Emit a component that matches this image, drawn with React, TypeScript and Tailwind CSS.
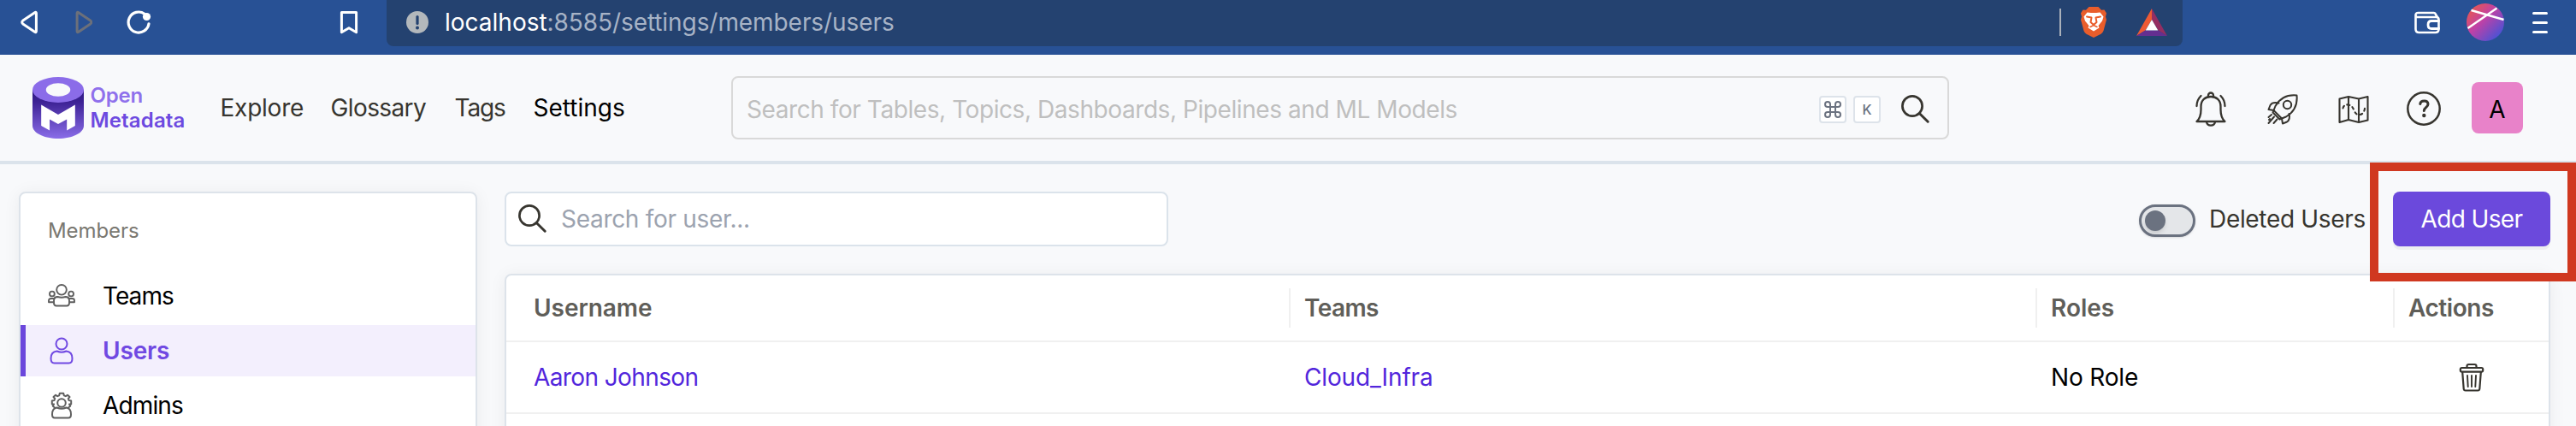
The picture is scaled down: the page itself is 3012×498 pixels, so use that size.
import type { ReactNode } from "react";

type IconProps = { w: number; h: number; className?: string; children: ReactNode };

function Icon({ w, h, className = "", children }: IconProps) {
  return (
    <svg
      width={w}
      height={h}
      viewBox={`0 0 ${w} ${h}`}
      fill="none"
      stroke="currentColor"
      strokeLinecap="round"
      strokeLinejoin="round"
      className={`shrink-0 ${className}`}
    >
      {children}
    </svg>
  );
}

function BrowserBar() {
  return (
    <div className="flex h-16 bg-[#285195] text-white">
      <div className="flex h-[52px] w-[452px] items-center pl-6">
        <Icon w={20} h={28}>
          <path d="M18.4 3.6v20.8q0 2-1.8.9L2.8 16q-2.2-2 0-4L16.6 2.7q1.8-1.1 1.8.9z" strokeWidth="3" />
        </Icon>
        <Icon w={20} h={28} className="ml-[44px] text-[#6c707a]">
          <path d="M2.1 3.6v20.8q0 2 1.8.9L17.7 16q2.2-2 0-4L3.9 2.7q-1.8-1.1-1.8.9z" strokeWidth="3" />
        </Icon>
        <Icon w={30} h={30} className="ml-10">
          <path d="M21 5.2A12 12 0 1 0 26 16.8" strokeWidth="3.2" />
          <circle cx="23.5" cy="8.5" r="4.6" fill="currentColor" stroke="none" />
        </Icon>
        <Icon w={24} h={28} className="ml-[218px]">
          <path d="M3.4 2.5h17.200v23.300L12 20.800l-8.600 5z" strokeWidth="3" />
        </Icon>
      </div>
      <div className="flex h-[54px] w-[2100px] items-center rounded-b-lg bg-[#244270] pb-0.5 pl-[23px]">
        <Icon w={26} h={26}>
          <circle cx="13" cy="13" r="13" fill="#b3b8bc" stroke="none" />
          <path d="M13 6.5v8" stroke="#244270" strokeWidth="3.2" />
          <circle cx="13" cy="19.5" r="2" fill="#244270" stroke="none" />
        </Icon>
        <span className="ml-[19px] w-[119.5px] text-[28px] leading-[50px]">localhost</span>
        <span className="w-[1768.5px] whitespace-nowrap text-[28px] leading-[50px] tracking-[-0.071px] text-[#a7b3c6]">
          :8585/settings/members/users
        </span>
        <div className="h-8 w-0.5 shrink-0 bg-[#aab1bb]" />
        <Icon w={32} h={36} className="ml-[22px]">
          <path
            d="M10.5 0h11l3.5 3.8 3.5-.3 2.5 4-1 4 1 3.5L27.5 28q-.8 2.300-3 3.800L16 36l-8.500-4.200q-2.200-1.500-3-3.800L1 15l1-3.500-1-4 2.500-4 3.500.3z"
            fill="#e95d2b"
            stroke="none"
          />
          <path
            d="M8.5 6.5 13 7h6l4.500-.5 4 5-1.500 5-4.500 5.500 1 2.500L16 28.500 9.500 24.500l1-2.500L6 16.500l-1.500-5z"
            fill="#fff"
            stroke="none"
          />
          <path d="M8 11.500l5.500 1-1 5.500 3.500 3 3.500-3-1-5.500 5.500-1" stroke="#e95d2b" strokeWidth="2" />
          <path d="M12 23.500l4-2 4 2" stroke="#e95d2b" strokeWidth="1.6" />
        </Icon>
        <Icon w={36} h={32} className="ml-[34px]">
          <path d="M18 0v13L10.500 25.500 0 32z" fill="#ee5a34" stroke="none" />
          <path d="M18 0v13l7.500 12.500L36 32z" fill="#942e62" stroke="none" />
          <path d="M0 32l10.500-6.500h15L36 32z" fill="#642f90" stroke="none" />
          <path d="M18 13l7.300 12.500H10.700z" fill="#fff" stroke="none" />
        </Icon>
      </div>
      <div className="flex h-[52px] flex-1 items-center pl-[270px]">
        <Icon w={32} h={28} className="mt-0.5">
          <path d="M2.500 5v16q0 4 4 4h19q4 0 4-4V10q0-3-3-3h-21q-3 0-3-2.500Q2.500 2 5.500 2h18q2 0 2.500 2l2 3" strokeWidth="2.6" />
          <path d="M29.500 11.500H21q-4 0-4 4.500t4 4.500h8.500" strokeWidth="2.8" />
        </Icon>
        <svg width="44" height="44" viewBox="0 0 44 44" className="ml-[30px] shrink-0">
          <defs>
            <linearGradient id="profile" x1="0.1" y1="0.1" x2="0.9" y2="0.9">
              <stop offset="0" stopColor="#e8584f" />
              <stop offset="0.42" stopColor="#c041a6" />
              <stop offset="1" stopColor="#4353d8" />
            </linearGradient>
          </defs>
          <circle cx="22" cy="22" r="22" fill="url(#profile)" />
          <path d="M1.500 29 35.500 5.500M5.500 8 43.500 19" stroke="#fff" strokeWidth="2.4" />
        </svg>
        <div className="ml-[33px] flex h-[25px] w-[18px] flex-col justify-between">
          <div className="h-[3px] rounded-full bg-white" />
          <div className="h-[3px] rounded-full bg-white" />
          <div className="h-[3px] rounded-full bg-white" />
        </div>
      </div>
    </div>
  );
}

function Logo() {
  return (
    <div className="flex w-[219.5px] items-center">
      <svg width="60" height="72" viewBox="0 0 56 72" preserveAspectRatio="none" className="shrink-0">
        <defs>
          <linearGradient id="drum" x1="0" y1="0" x2="0" y2="1">
            <stop offset="0" stopColor="#2d1a80" />
            <stop offset="0.25" stopColor="#3d2295" />
            <stop offset="1" stopColor="#8a6de8" />
          </linearGradient>
        </defs>
        <path d="M0 15v42c0 8.300 12.500 15 28 15s28-6.700 28-15V15z" fill="url(#drum)" />
        <ellipse cx="28" cy="15" rx="28" ry="15" fill="#8b6ce9" />
        <ellipse cx="28" cy="15" rx="13.300" ry="7.800" fill="#f8f9fb" />
        <path d="M9.500 32.500 28 44l18.500-11.500V57L37.500 62.500V49.500L28 55l-9.300-5.500v13L9.500 57z" fill="#fff" />
      </svg>
      <div className="ml-[7.5px] text-2xl font-semibold leading-[29px]">
        <div className="tracking-[-0.2px] text-[#8f70ec]">Open</div>
        <div className="tracking-[0.14px] text-[#6d4ae0]">Metadata</div>
      </div>
    </div>
  );
}

function SearchIcon({ className = "" }: { className?: string }) {
  return (
    <Icon w={34} h={34} className={`text-[#37352f] ${className}`}>
      <circle cx="13" cy="13" r="11.6" strokeWidth="2.7" />
      <path d="M21.300 21.500 31.200 31.200" strokeWidth="3" />
    </Icon>
  );
}

function NavBar() {
  return (
    <div className="flex h-32 items-center border-b-4 border-[#dbe3eb] bg-[#f8f9fb] pl-[38px] text-[28px] leading-9 text-[#37352f]">
      <Logo />
      <span className="w-[129px] tracking-[-0.234px]">Explore</span>
      <span className="w-[145px] tracking-[-0.603px]">Glossary</span>
      <span className="w-[92px] tracking-[-1.139px]">Tags</span>
      <span className="w-[231.5px] text-black">Settings</span>
      <div className="flex h-[74px] w-[1424px] items-center rounded-lg border-2 border-[#d9d9d9] pl-4">
        <span className="mt-1 w-[1254px] whitespace-nowrap tracking-[-0.427px] text-[#bfbfbf]">
          Search for Tables, Topics, Dashboards, Pipelines and ML Models
        </span>
        <div className="mt-1 flex h-8 w-8 shrink-0 items-center justify-center rounded border-2 border-[#dde3ea] bg-white">
          <Icon w={20} h={20} className="text-[#6b7280]">
            <path
              d="M7 7V4a3 3 0 1 0-3 3h12a3 3 0 1 0-3-3v12a3 3 0 1 0 3-3H4a3 3 0 1 0 3 3z"
              strokeWidth="2"
            />
          </Icon>
        </div>
        <div className="mt-1 ml-2 flex h-8 w-8 shrink-0 items-center justify-center rounded border-2 border-[#dde3ea] bg-white text-base font-medium leading-4 text-[#6b7280]">
          K
        </div>
        <SearchIcon className="mt-1 ml-6" />
      </div>
      <Icon w={36} h={42} className="ml-[288px] mt-1">
        <g strokeWidth="2.3">
          <path d="M1.500 35h33c-4-3.500-5-7-5-14v-3.500C29.500 10 24.500 6 18 6S6.500 10 6.500 17.500V21c0 7-1 10.500-5 14z" />
          <path d="M15 6V4.500a3 3 0 0 1 6 0V6M13 35.500c1 5.500 9 5.500 10 0" />
          <path d="M6.500 5C3.500 8 1.500 12 1.500 17M29.500 5c3 3 5 7 5 12" />
        </g>
      </Icon>
      <Icon w={36} h={36} className="ml-[48px] mt-1">
        <g strokeWidth="2">
          <path d="M34.500 1.500C24 .5 15 4.500 9.500 14L7.500 19 17 28.500l5-2C31.500 21 35.500 12 34.500 1.500z" />
          <circle cx="23.500" cy="12.500" r="4.7" />
          <path d="M13.500 10.500C9 9.500 5 10.500 3.500 13L1.500 18l6 1M25.500 23c1 4 0 8-2.500 9.500L18 34.500l-1-6M7.500 19l-1 2.500 8 8 2.500-1" />
          <path d="M5 24l-3.500 3M8 26.500 1.500 34M11.500 29.500 7.500 34M2 30l1-1" />
        </g>
      </Icon>
      <Icon w={36} h={34} className="ml-[47px] mt-1">
        <g strokeWidth="2.1">
          <path d="M1.500 4.500 12 2l12 2.500L34.500 2v27.500L24 32l-12-3L1.500 32zM12 2v27M24 4.500V32" />
          <path d="M5.500 15.500C6.500 12 9 11 12 11.500c4 1 5 3 6.500 6.500s3 5 6 5c3.500 0 6-2.500 6.500-7.500" strokeDasharray="3 3.8" />
        </g>
      </Icon>
      <Icon w={40} h={40} className="ml-11 mt-0.5">
        <circle cx="20" cy="20" r="18.700" strokeWidth="2.5" />
        <path d="M15.800 14.500c.5-4.500 9-4.800 9.200.3 0 3.700-4.500 3.500-4.700 7.700" strokeWidth="3" />
        <circle cx="20.300" cy="28" r="2.2" fill="currentColor" stroke="none" />
      </Icon>
      <div className="ml-9 flex h-[60px] w-[60px] items-center justify-center rounded-lg bg-[#e882c9] pt-1 text-black">A</div>
    </div>
  );
}

function TeamsIcon() {
  return (
    <Icon w={32} h={30}>
      <g strokeWidth="1.9">
        <circle cx="16" cy="7.8" r="5.8" />
        <circle cx="4.9" cy="12.500" r="2.9" />
        <circle cx="27.1" cy="12.500" r="2.9" />
        <path d="M7 23v-2.500q0-4.500 4.500-4.500 4.500 1.500 9 0 4.500 0 4.500 4.500V23q0 3.500-3 3.500H10q-3 0-3-3.500z" />
        <path d="M7.300 18H3.500Q1 18 1 20.500v1.800h6M24.700 18h3.800q2.500 0 2.500 2.500v1.800h-6" />
      </g>
    </Icon>
  );
}

function UserIcon() {
  return (
    <Icon w={32} h={32}>
      <g strokeWidth="2">
        <circle cx="16" cy="8" r="6.5" />
        <path d="M3.500 25c0-5 2.500-8 7-8.500 3.500 1.500 7.500 1.500 11 0 4.500.5 7 3.500 7 8.500 0 4-1 5.500-4 5.500h-17c-3 0-4-1.500-4-5.500z" />
      </g>
    </Icon>
  );
}

function AdminIcon() {
  return (
    <Icon w={32} h={32}>
      <g strokeWidth="2">
        <circle cx="16" cy="13" r="4.8" />
        <path d="M8 18.500 5.800 16.800 7 14.500H4.800v-4L7.500 10l.7-2-1.700-2L9 3.800l2.200 1.400 2-.9.600-2.600h4.400l.6 2.600 2 .9L23 3.800 25.500 6l-1.700 2 .7 2 2.700.5v4H25l1.200 2.300L24 18.500" />
        <path d="M5 26.500c0-4.500 1.500-7.500 5.500-8 3.500 1.500 7.500 1.500 11 0 4 .5 5.500 3.500 5.500 8 0 3-1 4-3 4H8c-2 0-3-1-3-4z" />
      </g>
    </Icon>
  );
}

function Sidebar() {
  return (
    <div className="h-[300px] w-[536px] shrink-0 rounded-lg border-2 border-[#dde3ea] bg-white pt-[26px] text-[28px] leading-9 text-black shadow-[0_2px_20px_rgba(0,0,0,0.06)]">
      <div className="pl-8 text-2xl leading-9 tracking-[-0.070px] text-[#7a7871]">Members</div>
      <div className="mt-7 flex h-[60px] items-center pl-8">
        <span className="text-[#5f5f5f]"><TeamsIcon /></span>
        <span className="ml-8 tracking-[-0.934px]">Teams</span>
      </div>
      <div className="mt-1 flex h-[60px] items-center border-l-[6px] border-[#6b47dc] bg-[#f3effd] pl-[26px] font-semibold text-[#7049e2]">
        <UserIcon />
        <span className="ml-8 tracking-[-0.164px]">Users</span>
      </div>
      <div className="mt-1 flex h-[60px] items-center pl-8">
        <span className="text-[#5f5f5f]"><AdminIcon /></span>
        <span className="ml-8 tracking-[-0.863px]">Admins</span>
      </div>
    </div>
  );
}

function Toolbar() {
  return (
    <div className="flex h-16 items-center text-[28px] leading-9">
      <div className="flex h-16 w-[776px] items-center rounded-lg border-2 border-[#dbe3eb] bg-white pl-3.5">
        <SearchIcon />
        <span className="ml-4 tracking-[-0.301px] text-[#9ca3af]">Search for user...</span>
      </div>
      <div className="mt-1 ml-auto flex h-[38px] w-[66px] items-center rounded-full border-[3px] border-[#6b7280] bg-[#e4e6e9] pl-1 shadow-sm">
        <div className="h-6 w-6 rounded-full bg-[#6b7280] shadow-md" />
      </div>
      <span className="ml-4 w-[215px] tracking-[-0.321px] text-[#37352f]">Deleted Users</span>
      <button className="h-16 w-[184px] rounded-lg bg-[#6b49dc] text-center tracking-[-0.632px] text-white shadow-[0_4px_0_rgba(0,0,0,0.04)]">
        Add User
      </button>
    </div>
  );
}

function UsersTable() {
  return (
    <div className="mt-8 h-[220px] rounded-lg border-2 border-[#dde3ea] bg-white text-[28px] leading-9 shadow-[0_2px_20px_rgba(0,0,0,0.06)]">
      <div className="flex h-[78px] items-center border-b-2 border-[#f0f0f0] font-semibold text-[#5f5e59]">
        <div className="flex h-[46px] w-[917px] items-center border-r-2 border-[#f0f0f0] pl-8 tracking-[-0.050px]">Username</div>
        <div className="flex h-[46px] w-[873px] items-center border-r-2 border-[#f0f0f0] pl-4 tracking-[-0.604px]">Teams</div>
        <div className="flex h-[46px] w-[418px] items-center border-r-2 border-[#f0f0f0] pl-4">Roles</div>
        <div className="pl-4 tracking-[-0.442px]">Actions</div>
      </div>
      <div className="flex h-[84px] items-center border-b-2 border-[#f0f0f0] text-[#5226dc]">
        <div className="w-[917px] pl-8 tracking-[-0.6px]">Aaron Johnson</div>
        <div className="w-[873px] pl-4 tracking-[-0.140px]">Cloud_Infra</div>
        <div className="w-[418px] pl-4 tracking-[-0.157px] text-black">No Role</div>
        <div className="flex flex-1 justify-center">
          <Icon w={30} h={34} className="text-[#37352f]">
            <g strokeWidth="2.2">
              <rect x="1.8" y="6" width="26.4" height="4.6" rx="1.8" />
              <path d="M9.500 6V4Q9.500 2 11.500 2h7q2 0 2 2v2M4.200 11l1.500 19.500q.2 2 2 2h14.600q1.800 0 2-2L25.800 11" />
              <path d="M10 15l.7 13M15 15v13M20 15l-.7 13" strokeWidth="1.9" />
            </g>
          </Icon>
        </div>
      </div>
    </div>
  );
}

export default function App() {
  return (
    <div className="relative h-[498px] w-[3012px] overflow-hidden bg-[#f8f9fb] font-['Inter',sans-serif]">
      <BrowserBar />
      <NavBar />
      <div className="flex gap-8 pt-8 pl-[22px]">
        <Sidebar />
        <div className="w-[2392px]">
          <Toolbar />
          <UsersTable />
        </div>
      </div>
      <div className="absolute top-[190px] left-[2771px] h-[139px] w-[241px] border-[10px] border-[#d03820]" />
    </div>
  );
}
